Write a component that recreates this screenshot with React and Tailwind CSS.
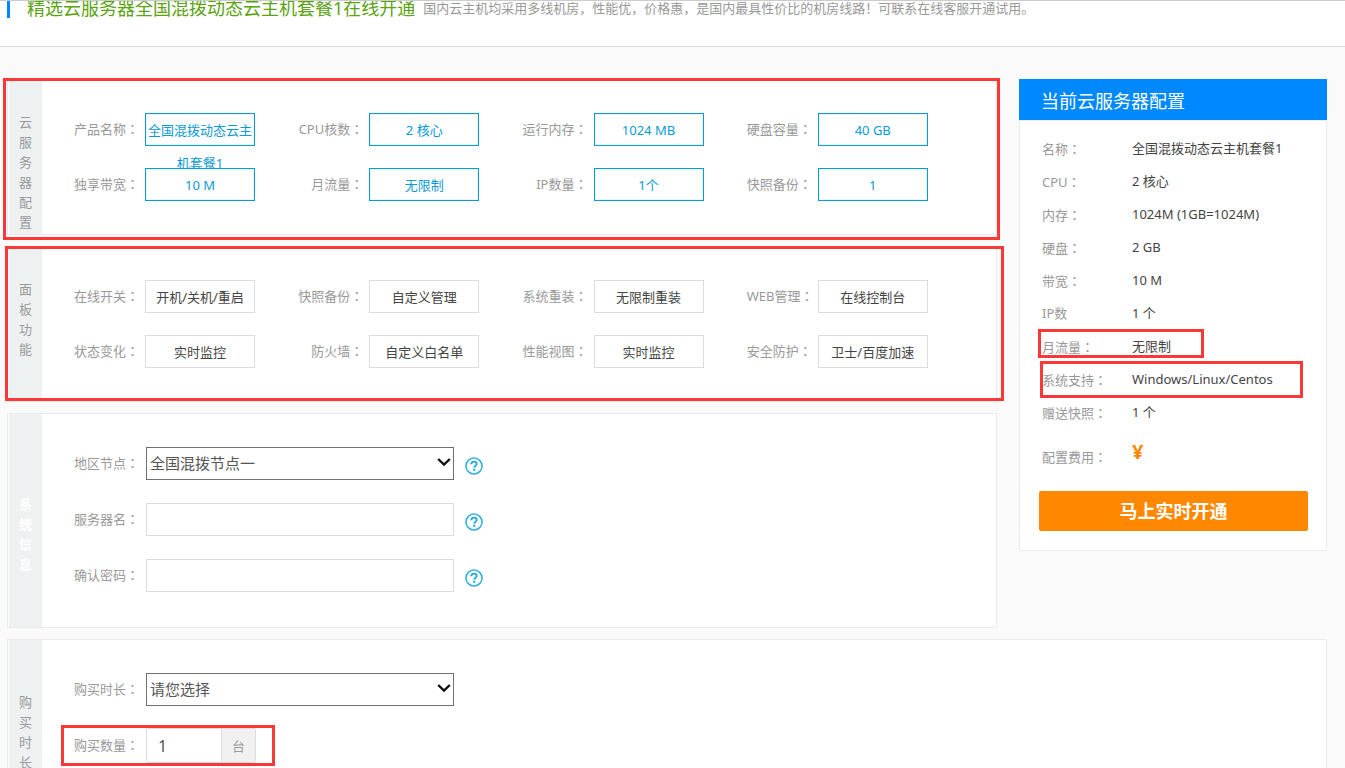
import React from "react";

const CONFIG = [
  ["产品名称", "全国混拨动态云主机套餐1"],
  ["CPU核数", "2 核心"],
  ["运行内存", "1024 MB"],
  ["硬盘容量", "40 GB"],
  ["独享带宽", "10 M"],
  ["月流量", "无限制"],
  ["IP数量", "1个"],
  ["快照备份", "1"],
];

const FEATURES = [
  ["在线开关", "开机/关机/重启"],
  ["快照备份", "自定义管理"],
  ["系统重装", "无限制重装"],
  ["WEB管理", "在线控制台"],
  ["状态变化", "实时监控"],
  ["防火墙", "自定义白名单"],
  ["性能视图", "实时监控"],
  ["安全防护", "卫士/百度加速"],
];

const SUMMARY = [
  { name: "名称", value: "全国混拨动态云主机套餐1" },
  { name: "CPU", value: "2 核心" },
  { name: "内存", value: "1024M (1GB=1024M)" },
  { name: "硬盘", value: "2 GB" },
  { name: "带宽", value: "10 M" },
  { name: "IP数", value: "1 个", bare: true },
  { name: "月流量", value: "无限制", frame: "-left-1 -top-px h-[29px] w-[166px]" },
  { name: "系统支持", value: "Windows/Linux/Centos", frame: "-left-0.5 -top-0.5 h-[37px] w-[263px]" },
  { name: "赠送快照", value: "1 个" },
];

function Frame({ className }) {
  return (
    <div
      aria-hidden="true"
      className={"pointer-events-none absolute z-10 border-3 border-[#fb3838] " + className}
    />
  );
}

function Colon() {
  return <span className="font-['Noto_Sans_CJK_JP',sans-serif]">：</span>;
}

function Section({ title, tabClass, className = "", children }) {
  return (
    <section className={"relative flex border border-[#ebebeb] bg-white pl-px " + className}>
      <h2 className={"w-[33px] shrink-0 bg-[#edf1f2] px-[10px] leading-5 break-all " + tabClass}>
        {title}
      </h2>
      {children}
    </section>
  );
}

function SpecGrid({ items, boxClass }) {
  return (
    <dl className="grid flex-1 grid-cols-4 content-start gap-y-[22px] pt-[33px] pr-[25px] pb-[33px] pl-8">
      {items.map(([name, value]) => (
        <div key={name} className="flex h-[33px] gap-1.5">
          <dt className="w-[65px] shrink-0 text-right leading-[31px] whitespace-nowrap text-[#999]">
            {name}
            <Colon />
          </dt>
          <dd className={"w-[110px] shrink-0 border bg-white text-center leading-[33px] " + boxClass}>
            {value}
          </dd>
        </div>
      ))}
    </dl>
  );
}

function Field({ id, label, help, children }) {
  return (
    <div className="relative flex items-center">
      <label htmlFor={id} className="mr-[7px] w-[65px] shrink-0 text-right whitespace-nowrap text-[#999]">
        {label}
        <Colon />
      </label>
      {children}
      {help && (
        <button type="button" aria-label={label + "说明"} className="mt-1 ml-[11px]">
          <svg width="18" height="18" viewBox="0 0 19 19" fill="none">
            <circle cx="9.5" cy="9.5" r="8.5" stroke="#35b2de" strokeWidth="1.7" />
            <path
              d="M6.7 7.6C6.7 5.9 7.9 4.9 9.5 4.9s2.8 1 2.8 2.4c0 2-2.5 2.1-2.5 4"
              stroke="#22a9d9"
              strokeWidth="2"
            />
            <rect x="8.7" y="12.4" width="2.1" height="2.1" fill="#22a9d9" />
          </svg>
        </button>
      )}
    </div>
  );
}

function Select({ id, option }) {
  return (
    <div className="relative">
      <select
        id={id}
        className="block h-[33px] w-[308px] appearance-none border border-[#707070] bg-white pl-[3px] text-[15px] text-[#555]"
      >
        <option>{option}</option>
      </select>
      <svg
        className="pointer-events-none absolute top-[10px] right-[3px]"
        width="14"
        height="11"
        viewBox="0 0 14 11"
        fill="none"
      >
        <path d="M1.2 2 7 7.6 12.8 2" stroke="#111" strokeWidth="2.4" />
      </svg>
    </div>
  );
}

const INPUT = "h-[33px] w-[308px] border border-[#ddd] bg-white px-2 text-[15px] text-[#555]";

export default function App() {
  return (
    <div className="h-screen overflow-hidden bg-[#fafafa] font-['Noto_Sans','Noto_Sans_CJK_SC',sans-serif] text-[13px] text-[#444]">
      <header className="h-[47px] overflow-hidden border-t border-b border-t-[#ccc] border-b-[#ddd] bg-white pl-[7px]">
        <div className="-mt-[3px] flex h-5 items-center border-l-3 border-[#0088ff] pl-[17px] whitespace-nowrap">
          <h1 className="text-[18px] leading-5 text-[#5ba311]">
            精选云服务器全国混拨动态云主机套餐1在线开通
          </h1>
          <p className="ml-2 leading-5 text-[#999]">
            国内云主机均采用多线机房，性能优，价格惠，是国内最具性价比的机房线路！可联系在线客服开通试用。
          </p>
        </div>
      </header>

      <main className="flex flex-col gap-[11px] pt-8 pr-[18px] pl-[7px]">
        <div className="flex items-start gap-[22px]">
          <div className="flex min-w-0 flex-1 flex-col gap-[11px]">
            <Section title="云服务器配置" tabClass="pt-8 text-[#999]">
              <SpecGrid
                items={CONFIG}
                boxClass="border-[#0a9bd6] text-[#0a9bd6] shadow-[inset_0_0_0_1px_#e8f6fb]"
              />
              <Frame className="-top-0.5 -right-1 -bottom-1.5 -left-[5px]" />
            </Section>

            <Section title="面板功能" tabClass="pt-8 text-[#999]">
              <SpecGrid items={FEATURES} boxClass="border-[#ddd] text-[#444]" />
              <Frame className="-top-px -right-2 bottom-0 -left-[3px]" />
            </Section>

            <Section title="系统信息" tabClass="pt-20 font-bold text-white">
              <div className="flex flex-1 flex-col gap-[23px] pt-[33px] pb-[35px] pl-8">
                <Field id="node" label="地区节点" help>
                  <Select id="node" option="全国混拨节点一" />
                </Field>
                <Field id="server" label="服务器名" help>
                  <input id="server" type="text" className={INPUT} />
                </Field>
                <Field id="password" label="确认密码" help>
                  <input id="password" type="password" className={INPUT} />
                </Field>
              </div>
            </Section>
          </div>

          <aside className="w-[308px] shrink-0 bg-white">
            <h2 className="bg-[#0088ff] pt-[3px] pl-[22px] text-[18px] leading-[38px] text-white">
              当前云服务器配置
            </h2>
            <div className="border border-[#ebebeb] pt-[11px] pr-[18px] pb-[19px] pl-[19px]">
              <dl className="pl-[3px]">
                {SUMMARY.map(({ name, value, bare, frame }) => (
                  <div key={name} className="relative flex h-[33px] leading-[33px] whitespace-nowrap">
                    <dt className="w-[90px] text-[#999]">
                      {name}
                      {!bare && <Colon />}
                    </dt>
                    <dd>{value}</dd>
                    {frame && <Frame className={frame} />}
                  </div>
                ))}
                <div className="mb-1.5 flex h-14 items-center">
                  <dt className="w-[90px] text-[#999]">
                    配置费用
                    <Colon />
                  </dt>
                  <dd className="pb-2.5 text-[20px] leading-5 font-bold text-[#ff8800]">¥</dd>
                </div>
              </dl>
              <button
                type="button"
                className="h-10 w-full rounded-xs bg-[#ff8800] text-[18px] font-bold text-white"
              >
                马上实时开通
              </button>
            </div>
          </aside>
        </div>

        <Section title="购买时长" tabClass="pt-[52px] text-[#999]">
          <div className="flex flex-1 flex-col gap-[22px] pt-[33px] pb-[35px] pl-8">
            <Field id="period" label="购买时长">
              <Select id="period" option="请您选择" />
            </Field>
            <Field id="quantity" label="购买数量">
              <div className="flex h-[35px] rounded-xs border border-[#ddd]">
                <input
                  id="quantity"
                  type="text"
                  defaultValue="1"
                  className="w-[74px] bg-white pl-[11px] text-[16px] text-[#555]"
                />
                <span className="w-[34px] border-l border-[#ddd] bg-[#f1f1f1] text-center leading-[35px] text-[#999]">
                  台
                </span>
              </div>
              <Frame className="-top-[3px] -left-[13px] h-[41px] w-[214px]" />
            </Field>
          </div>
        </Section>
      </main>
    </div>
  );
}
